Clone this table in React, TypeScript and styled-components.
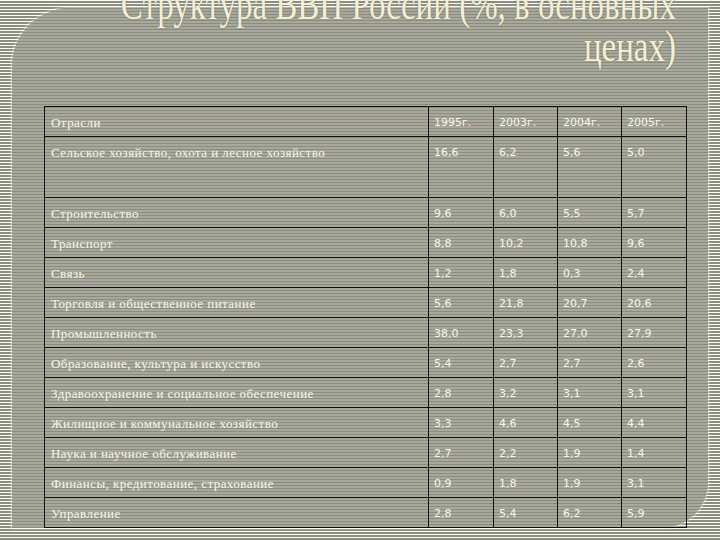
import styled, { createGlobalStyle } from "styled-components";

interface Row {
  name: string;
  values: string[];
  tall?: boolean;
}

const years = ["1995г.", "2003г.", "2004г.", "2005г."];
const colWidths = [384, 65, 64, 64, 65];

const rows: Row[] = [
  { name: "Сельское хозяйство, охота и лесное хозяйство", values: ["16,6", "6,2", "5,6", "5,0"], tall: true },
  { name: "Строительство", values: ["9,6", "6,0", "5,5", "5,7"] },
  { name: "Транспорт", values: ["8,8", "10,2", "10,8", "9,6"] },
  { name: "Связь", values: ["1,2", "1,8", "0,3", "2,4"] },
  { name: "Торговля и общественное питание", values: ["5,6", "21,8", "20,7", "20,6"] },
  { name: "Промышленность", values: ["38,0", "23,3", "27,0", "27,9"] },
  { name: "Образование, культура и искусство", values: ["5,4", "2,7", "2,7", "2,6"] },
  { name: "Здравоохранение и социальное обеспечение", values: ["2,8", "3,2", "3,1", "3,1"] },
  { name: "Жилищное и коммунальное хозяйство", values: ["3,3", "4,6", "4,5", "4,4"] },
  { name: "Наука и научное обслуживание", values: ["2,7", "2,2", "1,9", "1,4"] },
  { name: "Финансы, кредитование, страхование", values: ["0,9", "1,8", "1,9", "3,1"] },
  { name: "Управление", values: ["2,8", "5,4", "6,2", "5,9"] },
];

const GlobalStyle = createGlobalStyle`
  html, body {
    margin: 0;
    padding: 0;
    overflow: hidden;
  }
  body {
    background: repeating-linear-gradient(
      to bottom,
      #fbfbf6 0 1.5px,
      #8d8e82 1.5px 3px
    );
  }
`;

const Page = styled.div`
  width: 720px;
  height: 540px;
  box-sizing: border-box;
  padding: 8px 12px 12px 12px;
`;

const Panel = styled.div`
  height: 100%;
  border-top-left-radius: 58px;
  border-bottom-right-radius: 46px;
  background: repeating-linear-gradient(
    to bottom,
    #8b8c80 0 1.5px,
    #a8a99c 1.5px 3px
  );
  box-shadow: 0 0 2px 1px rgba(255, 255, 255, 0.55);
  display: flex;
  flex-direction: column;
`;

// the slide title is a tall, narrow serif: scale it horizontally
const Title = styled.h1`
  margin: -24px 0 0 0;
  padding-right: 32px;
  display: flex;
  flex-direction: column;
  align-items: flex-end;
  transform: scaleX(0.75);
  transform-origin: 664px 0;
  font-family: "Liberation Serif", "Times New Roman", serif;
  font-weight: normal;
  font-size: 44px;
  line-height: 42px;
  color: #f4f0d6;
  text-shadow: 0 0 2px rgba(90, 90, 70, 0.6);
`;

const TitleLine = styled.span`
  white-space: nowrap;
`;

const Table = styled.table`
  margin: 38px 0 0 32px;
  width: 642px;
  border-collapse: collapse;
  table-layout: fixed;
  border: 1.5px solid #101010;
`;

const Col = styled.col<{ $w: number }>`
  width: ${(p) => p.$w}px;
`;

const HeaderRow = styled.tr`
  background: linear-gradient(
    to bottom,
    transparent 0 17px,
    rgba(196, 150, 150, 0.55) 17px 18.5px,
    transparent 18.5px
  );
`;

const NameCell = styled.td`
  height: 30px;
  box-sizing: border-box;
  padding: 8px 6px 0;
  vertical-align: top;
  border: 1.5px solid #101010;
  font-family: "Liberation Serif", "Times New Roman", serif;
  font-size: 13px;
  line-height: 15px;
  letter-spacing: 0.45px;
  color: #f6f6ee;
  white-space: nowrap;
`;

const ValueCell = styled.td<{ $tall?: boolean }>`
  height: ${(p) => (p.$tall ? "61px" : "30px")};
  box-sizing: border-box;
  padding: 9px 5px 0;
  vertical-align: top;
  border: 1.5px solid #101010;
  font-family: "DejaVu Sans", Verdana, sans-serif;
  font-size: 11px;
  line-height: 14px;
  color: #f6f6ee;
  white-space: nowrap;
`;

export default function App() {
  return (
    <>
      <GlobalStyle />
      <Page>
        <Panel>
          <Title>
            <TitleLine>Структура ВВП России (%, в основных</TitleLine>
            <TitleLine>ценах)</TitleLine>
          </Title>
          <Table>
            <colgroup>
              {colWidths.map((w, i) => (
                <Col key={i} $w={w} />
              ))}
            </colgroup>
            <tbody>
              <HeaderRow>
                <NameCell>Отрасли</NameCell>
                {years.map((y) => (
                  <ValueCell key={y}>{y}</ValueCell>
                ))}
              </HeaderRow>
              {rows.map((r) => (
                <tr key={r.name}>
                  <NameCell>{r.name}</NameCell>
                  {r.values.map((v, i) => (
                    <ValueCell key={i} $tall={r.tall}>
                      {v}
                    </ValueCell>
                  ))}
                </tr>
              ))}
            </tbody>
          </Table>
        </Panel>
      </Page>
    </>
  );
}
